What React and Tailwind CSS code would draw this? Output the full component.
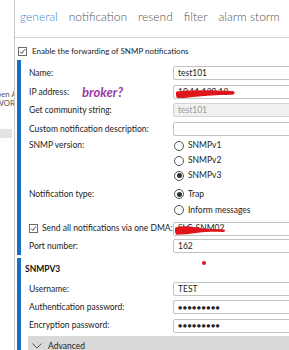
import React from 'react';

function CheckBox({ checked }) {
    return (
        <span className="w-[9px] h-[9px] shrink-0 border border-[#6b6b6b] bg-white flex items-center justify-center">
            {checked && (
                <svg width="7" height="7" viewBox="0 0 7 7">
                    <path d="M1 3.6 L2.8 5.4 L6 1.3" fill="none" stroke="#333" strokeWidth="0.9" />
                </svg>
            )}
        </span>
    );
}

function Radio({ checked, label }) {
    return (
        <div className="flex items-center gap-[4px] pl-[1px]">
            <span className="w-[10px] h-[10px] rounded-full border border-[#555] bg-white flex items-center justify-center">
                {checked && <span className="w-[5px] h-[5px] rounded-full bg-[#333]" />}
            </span>
            <span className="text-[8.5px] text-[#222]">{label}</span>
        </div>
    );
}

function Field({ value, disabled, password, children }) {
    return (
        <div
            className={`relative h-[14px] mr-[-12px] rounded-[2px] border flex items-center pl-[4px] text-[8.5px] overflow-hidden ${
                disabled ? 'bg-[#f0f0f0] border-[#d4d4d4] text-[#9a9a9a]' : 'bg-white border-[#c2c2c2] text-[#222]'
            }`}
        >
            {password ? <span className="tracking-[0.5px] text-[7px]">●●●●●●●●●</span> : value}
            {children}
        </div>
    );
}

// label | control row, label column ends where inputs begin
function Row({ label, height, children }) {
    return (
        <div className={`grid grid-cols-[144px_1fr] items-center ${height}`}>
            <span className="text-[8.5px] text-[#222] whitespace-nowrap">{label}</span>
            <div>{children}</div>
        </div>
    );
}

export default function App() {
    const tabs = ['general', 'notification', 'resend', 'filter', 'alarm storm'];

    return (
        <div className="w-[289px] h-[350px] overflow-hidden bg-white flex font-[Lato,sans-serif]">
            {/* Left edge of the neighbouring pane */}
            <div className="w-[15px] shrink-0 border-r border-[#c8c8c8] flex flex-col pt-[90px] text-[8px] text-[#555] overflow-hidden">
                <div className="flex justify-end whitespace-nowrap leading-[9px]">
                    <span className="mr-[-3px]">Open A</span>
                </div>
                <div className="flex justify-end whitespace-nowrap leading-[9px]">
                    <span className="mr-[-1px]">WOR</span>
                </div>
                <div className="mt-[21px] h-[9px] mr-[2px] bg-[#e3e3e3]" />
            </div>

            <div className="flex-1 min-w-0 flex flex-col">
                {/* Tabs */}
                <div className="h-[38px] shrink-0 border-b border-[#d2d2d2] flex items-center gap-[11px] pl-[5px] pb-[3px] text-[12px] font-light whitespace-nowrap">
                    {tabs.map((t, i) => (
                        <span key={t} className={i === 0 ? 'text-[#3d8ad0]' : 'text-[#555]'}>
                            {t}
                        </span>
                    ))}
                </div>

                {/* Enable row */}
                <div className="h-[22px] shrink-0 flex items-start pt-[9px] pl-[3px] gap-[5px]">
                    <CheckBox checked />
                    <span className="text-[8px] leading-[9px] text-[#222] whitespace-nowrap">
                        Enable the forwarding of SNMP notifications
                    </span>
                </div>

                {/* Main settings */}
                <div className="ml-[2px] h-[195px] shrink-0 border-l-[4px] border-[#1a6fc2] pl-[8px] pt-[4px] flex flex-col">
                    <Row label="Name:" height="h-[18.6px]">
                        <Field value="test101" />
                    </Row>
                    <Row
                        label={
                            <span className="flex items-center">
                                IP address:
                                <span className="ml-[13px] text-[13px] font-bold italic text-[#9b3aa6]">broker?</span>
                            </span>
                        }
                        height="h-[18.6px]"
                    >
                        <Field value="10.11.120.18">
                            <svg className="absolute left-[2px] top-[3px]" width="60" height="10" viewBox="0 0 60 10">
                                <path d="M0.5 2.5 C 12 0.8, 34 1, 57 2 C 59.5 3, 59 5.5, 56 5.8 C 38 5.8, 18 7.5, 2 9.8 C -0.5 8, -0.5 4, 0.5 2.5 Z" fill="#e0151b" />
                            </svg>
                        </Field>
                    </Row>
                    <Row label="Get community string:" height="h-[18.6px]">
                        <Field value="test101" disabled />
                    </Row>
                    <Row label="Custom notification description:" height="h-[18.6px]">
                        <Field value="" />
                    </Row>

                    <Row label="SNMP version:" height="h-[15px]">
                        <Radio label="SNMPv1" />
                    </Row>
                    <Row label="" height="h-[15px]">
                        <Radio label="SNMPv2" />
                    </Row>
                    <Row label="" height="h-[15px]">
                        <Radio label="SNMPv3" checked />
                    </Row>

                    <div className="mt-[3px]">
                        <Row label="Notification type:" height="h-[16px]">
                            <Radio label="Trap" checked />
                        </Row>
                        <Row label="" height="h-[16px]">
                            <Radio label="Inform messages" />
                        </Row>
                    </div>

                    <div className="mt-[2px]">
                        <Row
                            label={
                                <span className="flex items-center gap-[4px]">
                                    <CheckBox checked />
                                    Send all notifications via one DMA:
                                </span>
                            }
                            height="h-[17px]"
                        >
                            <Field value="SLC-SNM02">
                                <svg className="absolute left-[1px] top-[2px]" width="52" height="10" viewBox="0 0 52 10">
                                    <path d="M0.5 2.5 C 6 0.8, 16 1, 24 3 C 32 4, 42 4, 49 4.5 C 51 5.5, 50 7, 47 7 C 38 6.5, 30 7, 23 7.8 C 15 8.8, 7 9.8, 1.5 9.8 C -0.5 8, -0.5 4, 0.5 2.5 Z" fill="#e0151b" />
                                </svg>
                            </Field>
                        </Row>
                        <Row label="Port number:" height="h-[18px]">
                            <Field value="162" />
                        </Row>
                    </div>
                </div>

                {/* SNMPv3 credentials */}
                <div className="relative ml-[2px] mt-[3px] flex-1 border-l-[4px] border-[#1a6fc2] flex flex-col">
                    <span className="absolute left-[181px] top-[3px] w-[4px] h-[4px] rounded-full bg-[#e3161b]" />
                    <div className="h-[22px] pl-[4px] pt-[1px] flex items-center text-[8.5px] font-bold text-[#111]">
                        SNMPV3
                    </div>
                    <div className="pl-[8px]">
                        <Row label="Username:" height="h-[18.3px]">
                            <Field value="TEST" />
                        </Row>
                        <Row label="Authentication password:" height="h-[18.3px]">
                            <Field password />
                        </Row>
                        <Row label="Encryption password:" height="h-[18.3px]">
                            <Field password />
                        </Row>
                    </div>
                    <div className="ml-[7px] mt-[1px] h-[20px] bg-[#d9d9d9] flex items-center gap-[6px] pl-[4px] text-[8.5px] text-[#222]">
                        <svg width="10" height="6" viewBox="0 0 10 6">
                            <path d="M0.5 0.5 L5 5 L9.5 0.5" fill="none" stroke="#444" strokeWidth="0.9" />
                        </svg>
                        Advanced
                    </div>
                </div>
            </div>
        </div>
    );
}
